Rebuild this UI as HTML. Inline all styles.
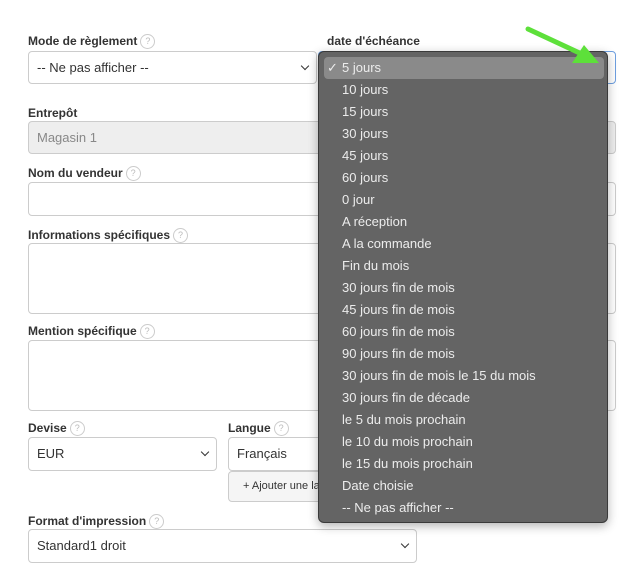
<!DOCTYPE html>
<html><head><meta charset="utf-8"><style>
body{margin:0;width:625px;height:573px;background:#fff;font-family:"Liberation Sans",Arial,sans-serif;position:relative;overflow:hidden}
.l{position:absolute;font-size:12px;font-weight:bold;color:#333}
.q{display:inline-block;width:13px;height:13px;border:1px solid #ccc;border-radius:50%;font-size:9px;color:#bbb;text-align:center;line-height:13px;font-weight:normal;vertical-align:middle;margin-left:3px}
.f{position:absolute;box-sizing:border-box;border:1px solid #ccc;border-radius:4px;background:#fff;font-size:13px;color:#333;padding-left:8px;line-height:31px}
.c::after{content:"";position:absolute;right:8px;top:11px;width:5px;height:5px;border-right:1.5px solid #333;border-bottom:1.5px solid #333;transform:rotate(45deg)}
.m{position:absolute;left:318px;top:51px;width:290px;height:472px;box-sizing:border-box;background:#646464;border:1px solid #3a3a3a;border-radius:6px;box-shadow:0 3px 10px rgba(0,0,0,.3)}
.m div{position:absolute;left:23px;font-size:13px;color:#ececec;height:22px;line-height:22px}
.h{position:absolute;left:5px;top:5px;width:280px;height:22px;background:#8a8a8a;border-radius:4px}
</style></head><body>
<div class="l" style="left:28px;top:34px">Mode de règlement<span class="q">?</span></div>
<div class="f c" style="left:28px;top:51px;width:289px;height:33px">-- Ne pas afficher --</div>
<div class="l" style="left:327px;top:34px">date d'échéance</div>
<div class="f" style="left:318px;top:51px;width:298px;height:33px;border-color:#6fa0e0"></div>
<div class="l" style="left:28px;top:106px">Entrepôt</div>
<div class="f" style="left:28px;top:121px;width:588px;height:33px;background:#eee;color:#888">Magasin 1</div>
<div class="l" style="left:28px;top:166px">Nom du vendeur<span class="q">?</span></div>
<div class="f" style="left:28px;top:182px;width:588px;height:34px"></div>
<div class="l" style="left:28px;top:228px">Informations spécifiques<span class="q">?</span></div>
<div class="f" style="left:28px;top:243px;width:588px;height:71px"></div>
<div class="l" style="left:28px;top:324px">Mention spécifique<span class="q">?</span></div>
<div class="f" style="left:28px;top:340px;width:588px;height:71px"></div>
<div class="l" style="left:28px;top:421px">Devise<span class="q">?</span></div>
<div class="f c" style="left:28px;top:437px;width:189px;height:34px">EUR</div>
<div class="l" style="left:228px;top:421px">Langue<span class="q">?</span></div>
<div class="f" style="left:228px;top:437px;width:200px;height:34px">Français</div>
<div class="f" style="left:228px;top:471px;width:200px;height:31px;background:#f5f5f5;font-size:11px;padding-left:14px;line-height:29px">+ Ajouter une langue</div>
<div class="l" style="left:28px;top:514px">Format d'impression<span class="q">?</span></div>
<div class="f c" style="left:28px;top:529px;width:389px;height:34px">Standard1 droit</div>
<div class="m"><span class="h"></span>
<div style="top:5px;left:8px">✓</div><div style="top:5px">5 jours</div>
<div style="top:27px">10 jours</div><div style="top:49px">15 jours</div><div style="top:71px">30 jours</div><div style="top:93px">45 jours</div><div style="top:115px">60 jours</div><div style="top:137px">0 jour</div><div style="top:159px">A réception</div><div style="top:181px">A la commande</div><div style="top:203px">Fin du mois</div><div style="top:225px">30 jours fin de mois</div><div style="top:247px">45 jours fin de mois</div><div style="top:269px">60 jours fin de mois</div><div style="top:291px">90 jours fin de mois</div><div style="top:313px">30 jours fin de mois le 15 du mois</div><div style="top:335px">30 jours fin de décade</div><div style="top:357px">le 5 du mois prochain</div><div style="top:379px">le 10 du mois prochain</div><div style="top:401px">le 15 du mois prochain</div><div style="top:423px">Date choisie</div><div style="top:445px">-- Ne pas afficher --</div>
</div>
<svg style="position:absolute;left:0;top:0" width="625" height="573"><line x1="528" y1="29" x2="586" y2="56" stroke="#5de03a" stroke-width="5" stroke-linecap="round"/><polygon points="584,45 599,63 572,63" fill="#5de03a"/></svg>
</body></html>
